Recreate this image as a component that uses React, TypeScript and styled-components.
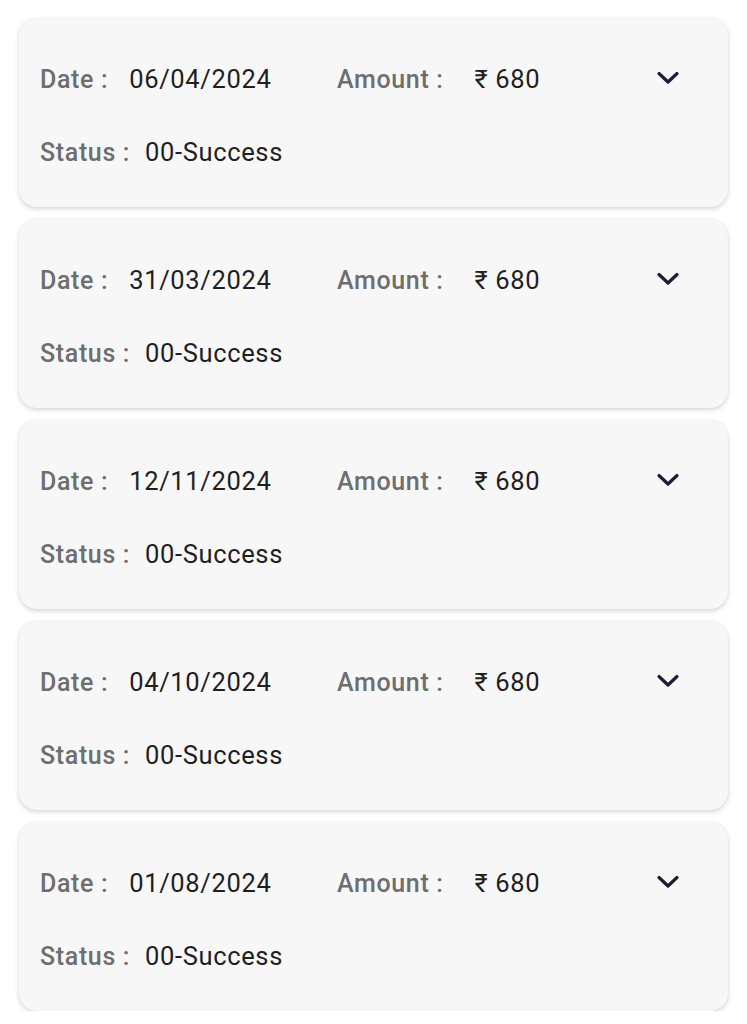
import React from "react";
import styled, { createGlobalStyle } from "styled-components";

const Global = createGlobalStyle`
  html, body { margin: 0; padding: 0; background: #ffffff; }
  body { font-family: Roboto, "Noto Sans", "DejaVu Sans", sans-serif; }
`;

const List = styled.div`
  display: flex;
  flex-direction: column;
  gap: 12px;
  padding: 18px 19px 0 19px;
`;

const Card = styled.div`
  background: #f7f7f7;
  border-radius: 18px;
  box-shadow: 0 2px 5px rgba(0, 0, 0, 0.16), 0 0 2px rgba(0, 0, 0, 0.06);
  padding: 46px 48px 40px 21px;
  display: flex;
  flex-direction: column;
  gap: 43px;
  height: 189px;
  box-sizing: border-box;
`;

const Row = styled.div`
  display: flex;
  align-items: center;
  height: 30px;
`;

const Field = styled.div<{ $width?: number }>`
  display: flex;
  align-items: center;
  width: ${(p) => (p.$width ? `${p.$width}px` : "auto")};
`;

const Label = styled.span<{ $gap: number }>`
  font-size: 25px;
  font-weight: 500;
  letter-spacing: 0.65px;
  color: #6e6e6e;
  margin-right: ${(p) => p.$gap}px;
  white-space: nowrap;
`;

const Value = styled.span`
  font-size: 25.5px;
  font-weight: 400;
  letter-spacing: 0.65px;
  color: #1f1f1f;
  white-space: nowrap;
`;

const Chevron = styled.svg`
  margin-left: auto;
  width: 24px;
  height: 14px;
  margin-top: -2px;
`;

const items = [
  "06/04/2024",
  "31/03/2024",
  "12/11/2024",
  "04/10/2024",
  "01/08/2024",
];

export default function App() {
  return (
    <>
      <Global />
      <List>
        {items.map((d) => (
          <Card key={d}>
            <Row>
              <Field $width={297}>
                <Label $gap={21}>Date :</Label>
                <Value>{d}</Value>
              </Field>
              <Field>
                <Label $gap={31}>Amount :</Label>
                <Value>₹ 680</Value>
              </Field>
              <Chevron viewBox="0 0 24 14">
                <path
                  d="M3 2.5 L12 11 L21 2.5"
                  fill="none"
                  stroke="#1c1c35"
                  strokeWidth="3.2"
                  strokeLinecap="round"
                  strokeLinejoin="round"
                />
              </Chevron>
            </Row>
            <Row>
              <Label $gap={15}>Status :</Label>
              <Value>00-Success</Value>
            </Row>
          </Card>
        ))}
      </List>
    </>
  );
}
